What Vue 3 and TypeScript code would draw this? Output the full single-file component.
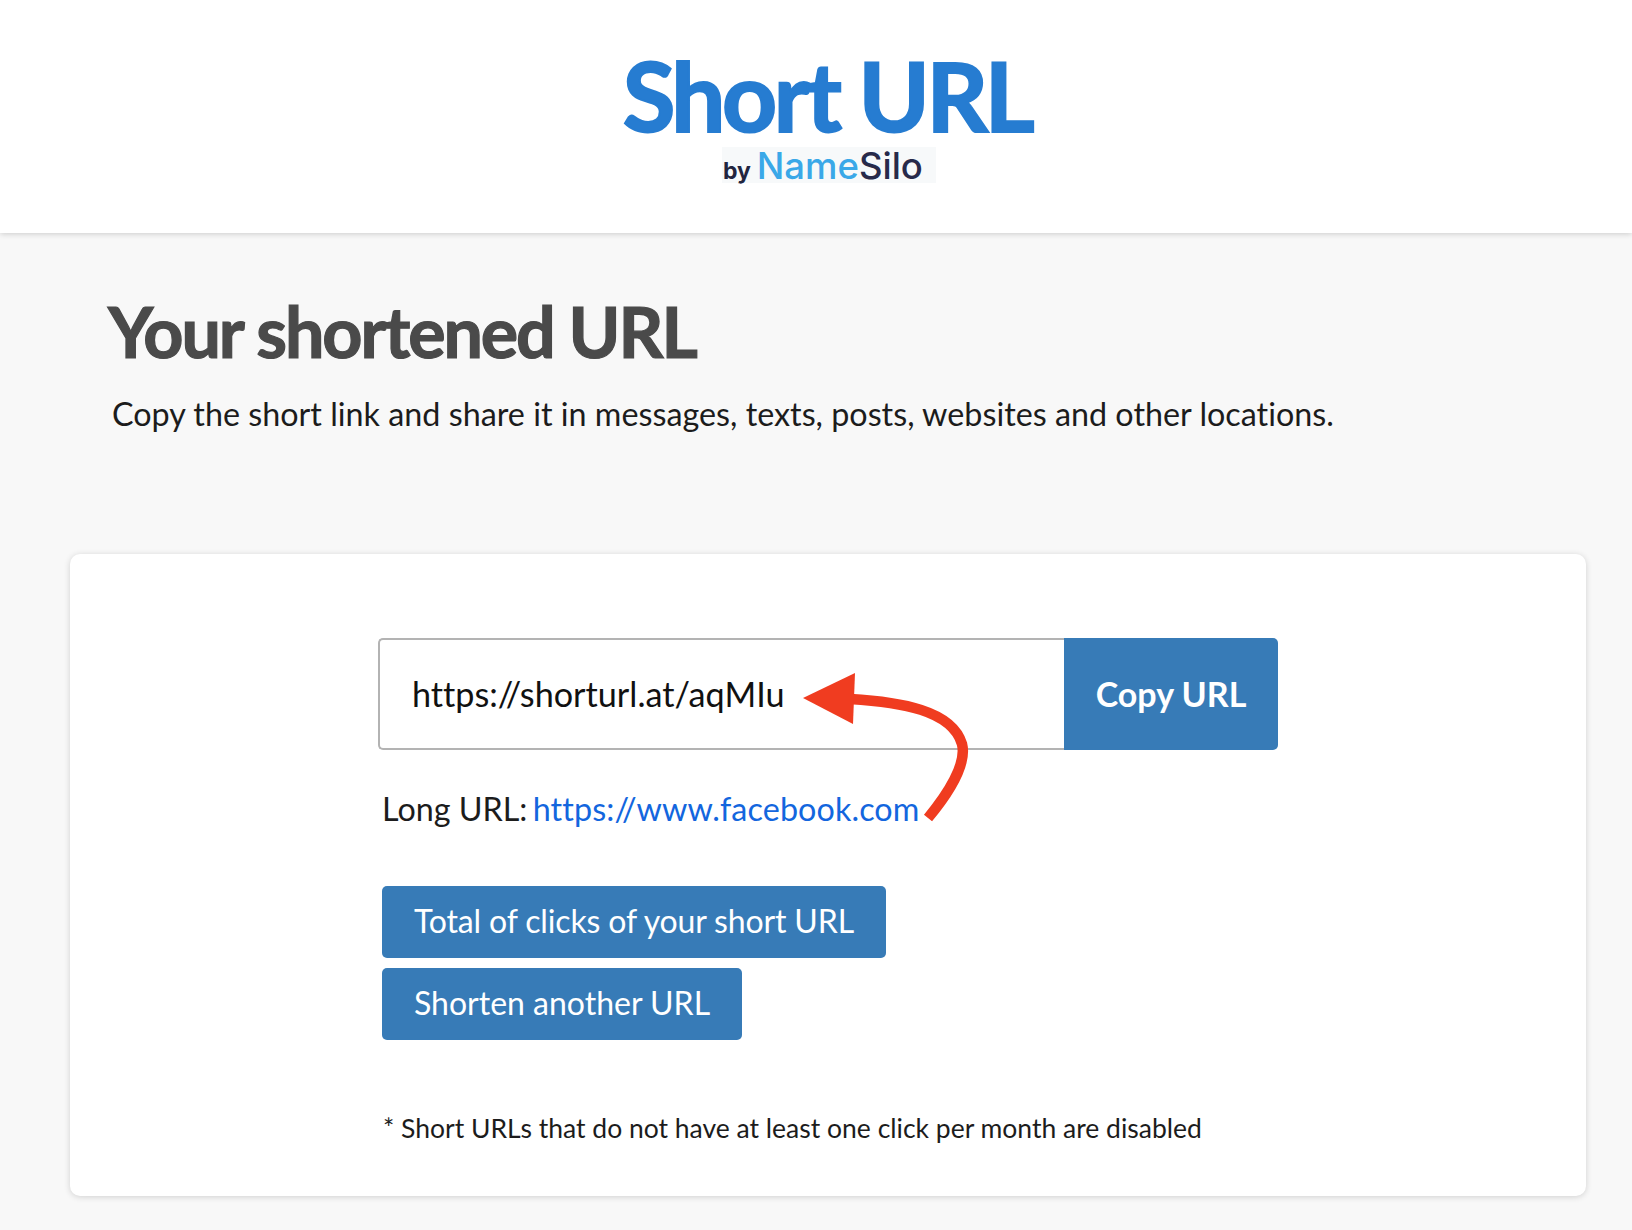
<script setup lang="ts">
const shortUrl = 'https://shorturl.at/aqMIu'
const longUrl = 'https://www.facebook.com'
</script>

<template>
  <div class="page">
    <header class="top">
      <div class="logo">Short URL</div>
      <div class="by"><span class="by-word">by</span> <span class="name">Name</span><span class="silo">Silo</span></div>
    </header>

    <main class="main">
      <h1 class="heading">Your shortened URL</h1>
      <p class="lead">Copy the short link and share it in messages, texts, posts, websites and other locations.</p>

      <section class="card">
        <div class="inner">
          <div class="url-row">
            <div class="url-input">{{ shortUrl }}</div>
            <button class="copy">Copy URL</button>
          </div>
          <p class="long">Long URL: <a class="link" href="#">{{ longUrl }}</a></p>
          <div class="actions">
            <button class="action">Total of clicks of your short URL</button>
            <button class="action">Shorten another URL</button>
          </div>
          <p class="note">* Short URLs that do not have at least one click per month are disabled</p>

          <svg class="arrow" width="180" height="160" viewBox="0 0 180 160" fill="none">
            <path d="M50 27 C100 30 152 38 162 72 C167 92 148 122 128 146" stroke="#f03c20" stroke-width="10.5" />
            <path d="M3 26 L55 1 L53 52 Z" fill="#f03c20" />
          </svg>
        </div>
      </section>
    </main>
  </div>
</template>

<style>
html,
body {
  background: #f8f8f8;
}
</style>

<style scoped>
.page {
  width: 1632px;
  height: 1230px;
  overflow: hidden;
  background: #f8f8f8;
  color: #1a1a1a;
  font-family: Lato, "Liberation Sans", sans-serif;
  font-variant-ligatures: none;
}

.top {
  height: 233px;
  box-sizing: border-box;
  padding: 42px 0 0 26px;
  background: #fff;
  box-shadow: 0 1px 6px rgba(0, 0, 0, 0.18);
  display: flex;
  flex-direction: column;
  align-items: center;
}

.logo {
  margin-left: -4px;
  font-family: Lato, sans-serif;
  font-size: 96px;
  font-weight: 700;
  line-height: 105px;
  letter-spacing: -3.4px;
  color: #267cd1;
  -webkit-text-stroke: 2px #267cd1;
}

.by {
  width: 214px;
  height: 36px;
  box-sizing: border-box;
  padding-left: 1px;
  background: #f7f9fa;
  font-family: Inter, sans-serif;
  font-size: 36.5px;
  font-weight: 500;
  line-height: 38px;
  white-space: nowrap;
}

.by-word {
  font-size: 23px;
  font-weight: 700;
  color: #22253f;
  margin-right: -4px;
}

.name {
  color: #3aa8e8;
}

.silo {
  color: #272a4a;
}

.main {
  padding: 0 46px 0 70px;
}

.heading {
  margin: 58px 0 0 38px;
  font-family: Lato, sans-serif;
  font-size: 70px;
  font-weight: 700;
  line-height: 80px;
  letter-spacing: -2.1px;
  color: #4a4a4a;
  -webkit-text-stroke: 1.2px #4a4a4a;
}

.lead {
  margin: 21px 0 0 42px;
  font-size: 32.3px;
  line-height: 44px;
  color: #1c1c1c;
}

.card {
  height: 642px;
  box-sizing: border-box;
  margin-top: 118px;
  padding: 84px 0 0 308px;
  background: #fff;
  border-radius: 10px;
  box-shadow: 0 1px 6px rgba(0, 0, 0, 0.16);
}

.inner {
  position: relative;
  width: 900px;
}

.url-row {
  display: flex;
  height: 112px;
}

.url-input {
  width: 686px;
  box-sizing: border-box;
  padding-left: 32px;
  border: 2px solid #b3b3b3;
  border-right: 0;
  border-radius: 5px 0 0 5px;
  background: #fff;
  font-size: 34.2px;
  line-height: 108px;
  color: #111;
}

.copy {
  width: 214px;
  border: 0;
  border-radius: 0 5px 5px 0;
  background: #377bb7;
  color: #fff;
  font-family: inherit;
  font-size: 34px;
  font-weight: 700;
  padding: 0 0 2px;
}

.long {
  margin: 37px 0 0 4px;
  font-size: 32.3px;
  line-height: 44px;
  color: #1c1c1c;
}

.link {
  margin-left: -3px;
  letter-spacing: 0.1px;
  color: #1366de;
  text-decoration: none;
}

.actions {
  margin: 55px 0 0 4px;
  display: flex;
  flex-direction: column;
  align-items: flex-start;
  gap: 10px;
}

.action {
  height: 72px;
  padding: 0 32px 3px;
  border: 0;
  border-radius: 5px;
  background: #377bb7;
  color: #fff;
  font-family: inherit;
  font-size: 32px;
  letter-spacing: -0.15px;
}

.action + .action {
  letter-spacing: 0;
}

.note {
  margin: 70px 0 0 5px;
  font-size: 26.5px;
  line-height: 36px;
  color: #1c1c1c;
}

.arrow {
  position: absolute;
  left: 422px;
  top: 34px;
}
</style>
